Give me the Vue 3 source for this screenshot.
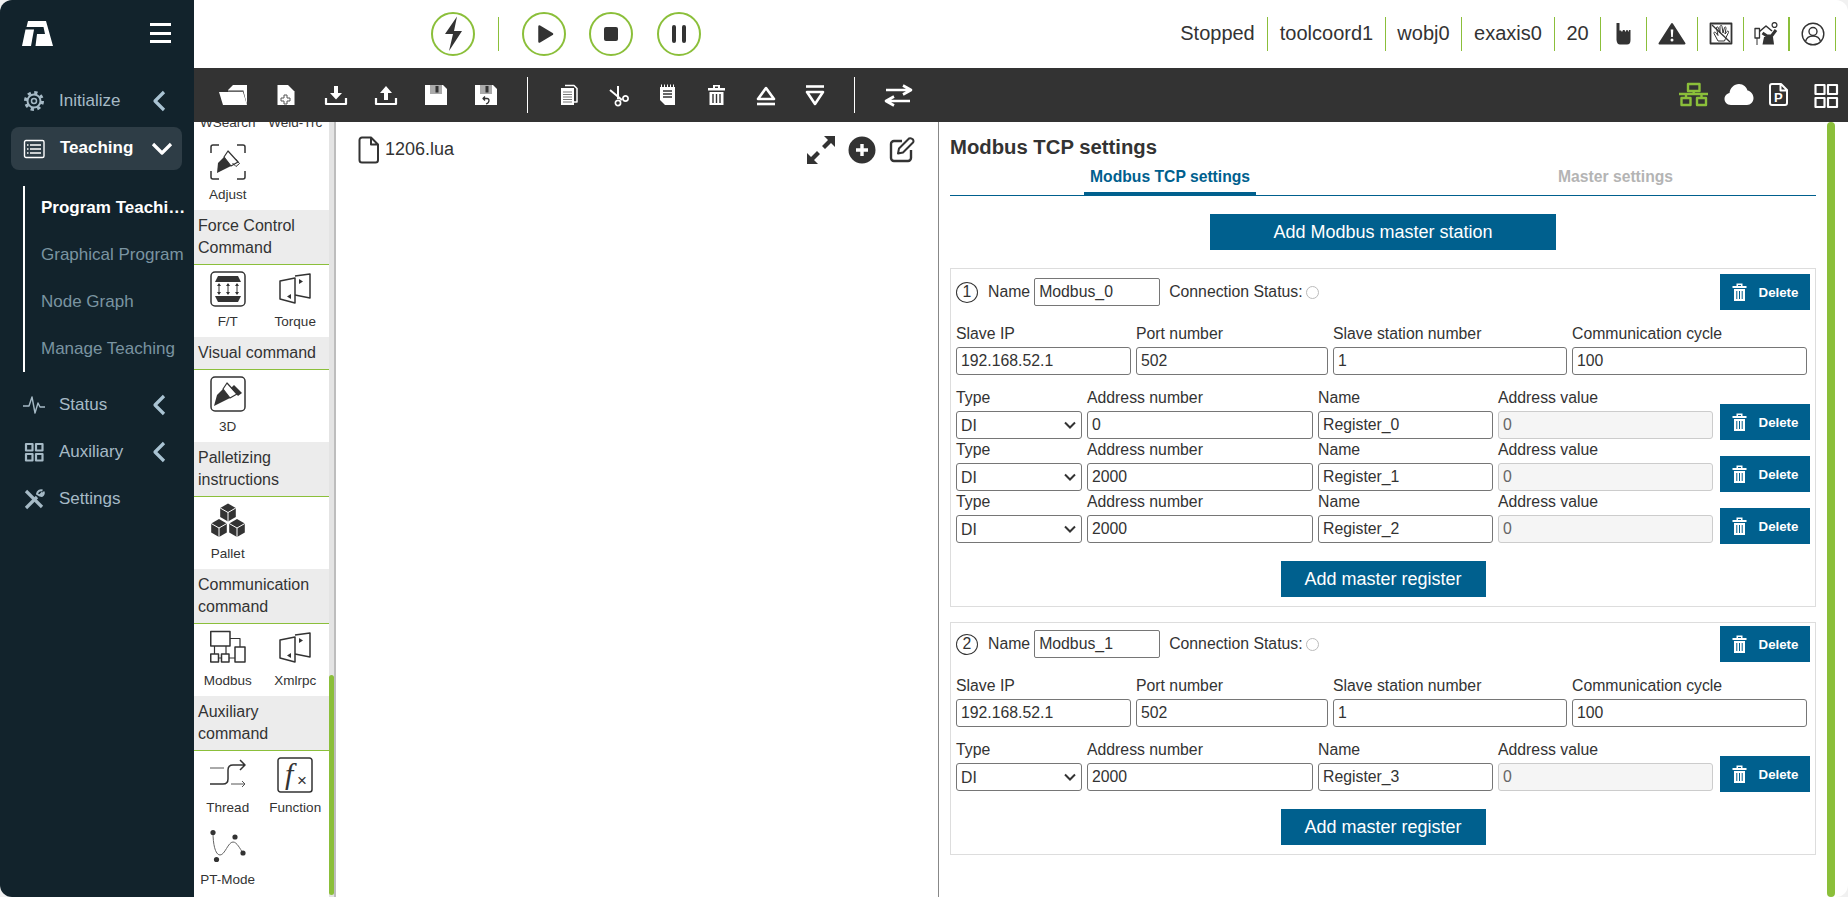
<template>
  <div class="app">
    <aside class="sidebar">
      <div class="brand">
        <Glyph class="logo" :w="31" :h="25" :paths="icons.logo" />
        <div class="burger"><span></span><span></span><span></span></div>
      </div>
      <nav class="menu">
        <div class="menu-item">
          <Glyph class="menu-icon" :w="22" :h="22" :paths="icons.gear" />
          <span>Initialize</span>
          <Glyph class="chevron" :w="14" :h="22" :paths="icons.chevron" />
        </div>
        <div class="menu-item active">
          <Glyph class="menu-icon" :w="22" :h="22" :paths="icons.list" />
          <span>Teaching</span>
          <Glyph class="chevron-down" :w="22" :h="14" :paths="icons.chevronDown" />
        </div>
        <div class="submenu">
          <div
            v-for="(name, i) in subMenu"
            :key="name"
            :class="['submenu-item', { current: i === 0 }]"
          >{{ name }}</div>
        </div>
        <div v-for="m in lowerMenu" :key="m.label" class="menu-item">
          <Glyph class="menu-icon" :w="22" :h="22" :paths="m.icon" />
          <span>{{ m.label }}</span>
          <Glyph v-if="m.arrow" class="chevron" :w="14" :h="22" :paths="icons.chevron" />
        </div>
      </nav>
    </aside>

    <div class="main">
      <header class="topbar">
        <button class="round"><Glyph :w="44" :h="44" :paths="icons.bolt" /></button>
        <i class="top-sep"></i>
        <button class="round"><Glyph :w="44" :h="44" :paths="icons.play" /></button>
        <button class="round"><Glyph :w="44" :h="44" :paths="icons.stop" /></button>
        <button class="round"><Glyph :w="44" :h="44" :paths="icons.pause" /></button>
        <div class="status">
          <div v-for="t in statusTexts" :key="t" class="cell">{{ t }}</div>
          <div class="cell cell-icon"><Glyph :w="16" :h="22" :paths="icons.hand" /></div>
          <div class="cell cell-icon wide"><Glyph :w="28" :h="23" :paths="icons.warning" /></div>
          <div class="cell cell-icon"><Glyph :w="24" :h="23" :paths="icons.noHand" /></div>
          <div class="cell cell-icon thick"><Glyph :w="26" :h="23" :paths="icons.robot" /></div>
          <div class="cell cell-icon"><Glyph :w="24" :h="24" :paths="icons.user" /></div>
        </div>
      </header>

      <div class="toolbar">
        <div class="tool-group first">
          <div v-for="(t, i) in fileTools" :key="i" class="tool"><Glyph :w="30" :h="30" :paths="t" /></div>
        </div>
        <i class="tool-sep"></i>
        <div class="tool-group second">
          <div v-for="(t, i) in editTools" :key="i" class="tool"><Glyph :w="30" :h="30" :paths="t" /></div>
        </div>
        <i class="tool-sep"></i>
        <Glyph class="swap" :w="30" :h="30" :paths="icons.swap" />
        <div class="tool-right">
          <Glyph :w="30" :h="30" :paths="icons.network" />
          <Glyph :w="30" :h="30" :paths="icons.cloud" />
          <Glyph :w="30" :h="30" :paths="icons.pdoc" />
          <Glyph :w="30" :h="30" :paths="icons.grid" />
        </div>
      </div>

      <div class="workspace">
        <div class="palette">
          <div class="palette-list">
            <div class="palette-scroll">
              <template v-for="sec in palette" :key="sec.title">
                <div v-if="sec.title" class="sec-title">{{ sec.title }}</div>
                <div class="sec-items">
                  <div v-for="item in sec.items" :key="item.label" class="sec-item">
                    <Glyph :w="36" :h="36" :paths="item.icon" />
                    <span>{{ item.label }}</span>
                  </div>
                </div>
              </template>
            </div>
          </div>
          <div class="palette-track"><div class="palette-thumb"></div></div>
        </div>

        <section class="editor">
          <div class="file-row">
            <Glyph :w="22" :h="28" :paths="icons.file" />
            <span class="file-name">1206.lua</span>
            <div class="file-actions">
              <Glyph :w="28" :h="28" :paths="icons.expand" />
              <Glyph :w="28" :h="28" :paths="icons.plus" />
              <Glyph :w="26" :h="28" :paths="icons.edit" />
            </div>
          </div>
        </section>

        <section class="settings">
          <div class="settings-body">
            <h2 class="title">Modbus TCP settings</h2>
            <div class="tabs">
              <div class="tab active">Modbus TCP settings</div>
              <div class="tab">Master settings</div>
            </div>
            <div class="center-btn first-btn">
              <button class="btn big">Add Modbus master station</button>
            </div>

            <div v-for="(st, idx) in stations" :key="st.name" class="card">
              <div class="name-row">
                <span class="num">{{ idx + 1 }}</span>
                <label class="name-label">Name</label>
                <input class="field name-input" :value="st.name" />
                <span class="conn">Connection Status:</span>
                <i class="radio"></i>
                <button class="btn del name-del"><Glyph :w="15" :h="18" :paths="icons.trashSmall" />Delete</button>
              </div>
              <div class="slave-row">
                <label v-for="f in slaveFields" :key="f.label" class="col">
                  <span>{{ f.label }}</span>
                  <input class="field" :value="f.value" />
                </label>
              </div>
              <div class="regs">
                <div v-for="r in st.regs" :key="r.name" class="reg-row">
                  <label class="col">
                    <span>Type</span>
                    <select class="field select"><option>DI</option><option>DO</option></select>
                  </label>
                  <label class="col">
                    <span>Address number</span>
                    <input class="field" :value="r.addr" />
                  </label>
                  <label class="col">
                    <span>Name</span>
                    <input class="field" :value="r.name" />
                  </label>
                  <label class="col">
                    <span>Address value</span>
                    <input class="field" value="0" disabled />
                  </label>
                  <button class="btn del reg-del"><Glyph :w="15" :h="18" :paths="icons.trashSmall" />Delete</button>
                </div>
              </div>
              <div class="center-btn add-reg">
                <button class="btn mid">Add master register</button>
              </div>
            </div>
          </div>
          <div class="settings-thumb"></div>
        </section>
      </div>
    </div>
  </div>
</template>

<script setup>
import { h } from 'vue'

// draws an svg from a list of fill / stroke / text parts
const Glyph = (props) =>
  h(
    'svg',
    { width: props.w, height: props.h, viewBox: `0 0 ${props.w} ${props.h}` },
    props.paths.map((p) =>
      p.text
        ? h('text', { x: p.x, y: p.y, fill: p.fill, 'font-size': p.size, 'font-family': p.family, 'font-style': p.italic, 'font-weight': p.weight }, p.text)
        : h('path', {
            d: p.d,
            fill: p.fill || 'none',
            stroke: p.stroke || 'none',
            'stroke-width': p.w,
            'stroke-dasharray': p.dash,
            'stroke-linejoin': 'round',
            'stroke-linecap': p.cap || 'butt',
            'fill-rule': 'evenodd'
          })
    )
  )
Glyph.props = ['w', 'h', 'paths']

const DARK = '#333333'
const WHITE = '#ffffff'
const GREEN = '#8bbf3a'
const MENU = '#a6bac6'
const f = (d, fill = DARK) => ({ d, fill })
const s = (d, stroke = DARK, w = 1.5, cap) => ({ d, stroke, w, cap })
const ring = (cx, cy, r) => `M${cx + r} ${cy}a${r} ${r} 0 1 1 ${-2 * r} 0a${r} ${r} 0 1 1 ${2 * r} 0Z`

const cube = (x, y) => [
  f(`M${x} ${y - 9}L${x + 7.8} ${y - 4.5}V${y + 4.5}L${x} ${y + 9}L${x - 7.8} ${y + 4.5}V${y - 4.5}Z`),
  s(`M${x - 7.8} ${y - 4.5}L${x} ${y}L${x + 7.8} ${y - 4.5}M${x} ${y}V${y + 9}`, WHITE, 1)
]

const panels = [
  s('M18 5L33 3V27L18 24'),
  s('M3 10L18 7V32L3 28Z'),
  f('M22 8L26 10.5L22 13Z'),
  f('M14 23L10 25.5L14 28Z')
]

const penBody = 'M14 13L18 7L28 18L21 22Z'
const penNib = 'M7 29L8 19L14 13L21 22L13 26Z'

const icons = {
  logo: [f('M6 0H24L31 25H13.5L15 13H23L21.5 6H4.5Z', WHITE), f('M3.5 8.5H12L9 25H0Z', WHITE)],
  gear: [
    { d: ring(11, 11, 8.5), stroke: MENU, w: 3, dash: '3.3 3.37' },
    s(ring(11, 11, 6.5), MENU, 2),
    s(ring(11, 11, 2.5), MENU, 1.5)
  ],
  list: [
    s('M3 2.5H19.5A1.5 1.5 0 0 1 21 4V18A1.5 1.5 0 0 1 19.5 19.5H3A1.5 1.5 0 0 1 1.5 18V4A1.5 1.5 0 0 1 3 2.5Z', WHITE, 1.4),
    s('M4 7H5.5M7 7H18M4 11H5.5M7 11H18M4 15H5.5M7 15H18', WHITE, 1.6)
  ],
  chevron: [s('M12 2L3 11L12 20', '#a9c3d3', 3.2)],
  chevronDown: [s('M2 2L11 11L20 2', WHITE, 3.2)],
  pulse: [s('M0 12H6L9 3L12 19L15 9L17 13H22', MENU, 1.4)],
  auxiliary: [s('M3 3H9.5V9.5H3ZM13 3H19.5V9.5H13ZM3 13H9.5V19.5H3ZM13 13H19.5V19.5H13Z', MENU, 2.2)],
  tools: [
    s('M3 3L19 19', MENU, 3.2),
    s('M3 20L14 9', MENU, 3.2),
    s('M19.5 4.5L16.5 7.5L14 6C14.5 3.5 17 1.5 19.5 2.5M17.5 8C19.5 8.5 21.5 6 20.5 3.5', MENU, 2)
  ],
  bolt: [f('M26 4.5L14 22H22L18 39L31 19H23Z')],
  play: [{ d: 'M17.5 14.5L30 22L17.5 29.5Z', fill: DARK, stroke: DARK, w: 2.5 }],
  stop: [f('M17 15H27A2 2 0 0 1 29 17V27A2 2 0 0 1 27 29H17A2 2 0 0 1 15 27V17A2 2 0 0 1 17 15Z')],
  pause: [s('M17 15V29M27 15V29', DARK, 4, 'round')],
  hand: [f('M.5 0H3.5V7.5H5L6 9L7 7H8.5L9.5 9L10.5 7H11.5L12.5 9L13 7H14.5V17Q14.5 21.5 11 21.5H4Q1 21.5 .5 17Z')],
  warning: [
    { d: 'M14 2L26.5 21.5H1.5Z', fill: DARK, stroke: DARK, w: 2 },
    f('M12.7 7.5H15.3L14.8 15H13.2Z', WHITE),
    f(ring(14, 18, 1.5), WHITE)
  ],
  noHand: [
    s('M1.5 1.5H22.5V21.5H1.5Z', DARK, 1.8),
    s('M3 3L21 20', DARK, 1.3),
    s('M9 19L5 11.5C4.5 10 6 9.5 7 11L9 13.5L7.5 6C7.5 4.5 9 4.5 9.5 6L11 11L11 4.5C11.5 3 13 3 13 4.5L14 11L15.5 5.5C16 4.5 17.5 5 17 6.5L16 12L18 9.5C19 8.5 20 9.5 19.5 10.5L16.5 16.5L15.5 19Z', DARK, 1)
  ],
  robot: [
    s('M2 6.5H6.5V16H2Z', DARK, 1.3),
    s('M4 16V23', DARK, 1),
    f('M11 15H20L21 22.5H9.5Z'),
    s('M6.5 9.5L13 4L19 9', DARK, 1.6),
    s('M9.5 11L14 14H18.5L23 8', DARK, 3),
    s(ring(21.5, 3, 2.4), DARK, 1.3)
  ],
  user: [
    s(ring(12, 12, 10.8), DARK, 1.4),
    s(ring(12, 9.5, 4), DARK, 1.4),
    s('M4.5 19.5C5.5 15.5 8.5 14 12 14C15.5 14 18.5 15.5 19.5 19.5', DARK, 1.4)
  ],
  swap: [s('M3 10H28M20 5.5L28 10L20 14.5', WHITE, 2.6), s('M27 21H3M11 16.5L3 21L11 25.5', WHITE, 2.6)],
  network: [
    s('M9 4H20.5V11H9Z', GREEN, 2.4),
    s('M0 14H29M14.7 11V14M7 14V18M22.5 14V18', GREEN, 2.4),
    s('M2.5 18H11.5V25H2.5ZM18 18H27V25H18Z', GREEN, 2.4)
  ],
  cloud: [f('M7 25C2.5 25 .5 21.5 .5 19C.5 15.5 3 13.5 5.5 13C6 8 10 4 15 4C19.5 4 22.5 7 23.5 10.5C27 11 29.5 14.5 29.5 18C29.5 22 26.5 25 23 25Z', WHITE)],
  pdoc: [
    s('M9 4H18L24 10V23A2 2 0 0 1 22 25H9A2 2 0 0 1 7 23V6A2 2 0 0 1 9 4ZM17.5 4V10.5H24', WHITE, 2),
    { text: 'P', x: 11, y: 22, fill: WHITE, size: 13, weight: 'bold', family: 'Liberation Sans' }
  ],
  grid: [s('M4.5 5H13.5V14H4.5ZM17 5H26V14H17ZM4.5 18H13.5V27H4.5ZM17 18H26V27H17Z', WHITE, 2.2)],
  file: [s('M4 1.5H13L20 8.5V24A2.5 2.5 0 0 1 17.5 26.5H4A2.5 2.5 0 0 1 1.5 24V4A2.5 2.5 0 0 1 4 1.5ZM13 1.5V8.5H20', DARK, 2)],
  expand: [f('M28 0V11L24 7L18 13L15 10L21 4L17 0Z'), f('M0 28V17L4 21L10 15L13 18L7 24L11 28Z')],
  plus: [f(ring(14, 14, 13.5)), s('M14 8V20M8 14H20', WHITE, 3.4)],
  edit: [
    s('M13 5H5A3 3 0 0 0 2 8V22A3 3 0 0 0 5 25H19A3 3 0 0 0 22 22V14', DARK, 2.4),
    s('M9 17.5L10 12.5L20 2.5Q22 1.5 24 3.5Q25 5.5 24 6.5L14 16.5Z', DARK, 2)
  ],
  trashSmall: [
    f('M.5 3H14.5V5H.5ZM4.5 3V.5H10.5V3H9V2H6V3Z', WHITE),
    f('M2 6H13V18H2Z', WHITE),
    s('M4.8 8V16M7.5 8V16M10.2 8V16', '#00608e', 1)
  ]
}

const subMenu = ['Program Teaching', 'Graphical Program', 'Node Graph', 'Manage Teaching']

const lowerMenu = [
  { label: 'Status', icon: icons.pulse, arrow: true },
  { label: 'Auxiliary', icon: icons.auxiliary, arrow: true },
  { label: 'Settings', icon: icons.tools, arrow: false }
]

const statusTexts = ['Stopped', 'toolcoord1', 'wobj0', 'exaxis0', '20']

const fileTools = [
  [f('M10 10L15 5H29V25L25.5 11H10Z', WHITE), f('M10 10H25.5V11.5H10Z', '#999'), f('M1 12H25L29 25H5Z', WHITE)],
  [f('M6.5 5H17L23.5 11.5V25H6.5Z', WHITE), s('M13 15H16V18H19V21H16V24H13V21H10V18H13Z', '#555', 1)],
  [f('M13 6H17V13H21L15 19.5L9 13H13Z', WHITE), s('M5 18V24H25V18', WHITE, 2.2)],
  [f('M15 6L21 13H17V20H13V13H9Z', WHITE), s('M5 18V24H25V18', WHITE, 2.2)],
  [f('M4 5H22L26 9V25H4Z', WHITE), f('M9 5H21V14H9Z', '#aaa'), f('M14.5 6H17.5V12.5H14.5Z', DARK)],
  [
    f('M4 5H22L26 9V25H4Z', WHITE),
    f('M9 5H21V14H9Z', '#aaa'),
    f('M14.5 6H17.5V12.5H14.5Z', DARK),
    s('M12 18.5H16Q18 18.5 18 20.5Q18 23 15 24M14 16.5L12 18.5L14 20.5', DARK, 1.3)
  ]
]

const editTools = [
  [
    s('M11 5.5H20L23 8.5V22H20', WHITE, 1.5),
    f('M7 8H20V25H7Z', WHITE),
    s('M9 12H18M9 14.5H18M9 17H18M9 19.5H18M9 22H18', '#777', 1.2)
  ],
  [
    s('M7 10L19 20M15 6V19', WHITE, 2),
    s(ring(15, 23, 2.6), WHITE, 1.7),
    s(ring(22.5, 18.5, 2.6), WHITE, 1.7)
  ],
  [
    f('M8 7H23V25H13L8 20Z', WHITE),
    s('M11 11H20M11 14H20M11 17H20', DARK, 1.3),
    s('M9.5 4.5V7M12.5 4.5V7M15.5 4.5V7M18.5 4.5V7M21.5 4.5V7', WHITE, 1)
  ],
  [
    f('M7 8H24V10.5H7ZM12 8V5H19V8H17V6.5H14V8Z', WHITE),
    f('M8.5 12H22.5V25H8.5Z', WHITE),
    s('M12 14V23M15.5 14V23M19 14V23', DARK, 1.4)
  ],
  [s('M16 8L24 19H8Z', WHITE, 2.6), s('M7 24H25', WHITE, 2.6)],
  [s('M16 24L24 12H8Z', WHITE, 2.6), s('M7 6.5H25', WHITE, 2.6)]
]

const palette = [
  {
    items: [
      { label: 'WSearch', icon: [] },
      { label: 'Weld-Trc', icon: [] },
      {
        label: 'Adjust',
        icon: [
          s('M1 9V3A2 2 0 0 1 3 1H9M27 1H33A2 2 0 0 1 35 3V9M35 27V33A2 2 0 0 1 33 35H27M9 35H3A2 2 0 0 1 1 33V27'),
          f(penNib),
          s(penBody, DARK, 1.2),
          s('M25.5 15L29.5 19.5L26 22.5L22.5 19', DARK, 1)
        ]
      }
    ]
  },
  {
    title: 'Force Control Command',
    items: [
      {
        label: 'F/T',
        icon: [
          s('M5 1H31A4 4 0 0 1 35 5V31A4 4 0 0 1 31 35H5A4 4 0 0 1 1 31V5A4 4 0 0 1 5 1Z'),
          f('M5 11L8 5H28L31 11Z'),
          f('M5 25H31L28 31H8Z'),
          s('M9 13V23M18 13V23M27 13V23', DARK, 1),
          f('M9 12L11 15H7ZM18 12L20 15H16ZM27 12L29 15H25ZM9 24L11 21H7ZM18 24L20 21H16ZM27 24L29 21H25Z')
        ]
      },
      { label: 'Torque', icon: panels }
    ]
  },
  {
    title: 'Visual command',
    items: [
      {
        label: '3D',
        icon: [
          s('M5 1H31A4 4 0 0 1 35 5V31A4 4 0 0 1 31 35H5A4 4 0 0 1 1 31V5A4 4 0 0 1 5 1Z'),
          f('M4 30L7 19L13 13L20 22L12 26Z'),
          s('M13 13L17 7L27 18L20 22Z', DARK, 1.2),
          f('M24 9L32 17L28 20L21 12Z')
        ]
      }
    ]
  },
  {
    title: 'Palletizing instructions',
    items: [{ label: 'Pallet', icon: [...cube(18, 9.5), ...cube(9, 25), ...cube(27, 25)] }]
  },
  {
    title: 'Communication command',
    items: [
      {
        label: 'Modbus',
        icon: [
          s('M.75 1.5H20V16H.75ZM.75 24H8.5V32H.75ZM11.5 24H19V32H11.5ZM25 17H35V32H25Z'),
          s('M4.5 16V24M16 16V24M8.5 28H11.5M19 28H25M20 8.5H30V17', DARK, 1.2)
        ]
      },
      { label: 'Xmlrpc', icon: panels }
    ]
  },
  {
    title: 'Auxiliary command',
    items: [
      {
        label: 'Thread',
        icon: [
          s('M0 27H13Q18 27 18 22V13Q18 8 23 8H35M30 3L35 8L30 13'),
          s('M0 11H14M21 27H35M32 24L35 27L32 30', '#555', 1)
        ]
      },
      {
        label: 'Function',
        icon: [
          s('M3.5 1H32.5A2.5 2.5 0 0 1 35 3.5V32.5A2.5 2.5 0 0 1 32.5 35H3.5A2.5 2.5 0 0 1 1 32.5V3.5A2.5 2.5 0 0 1 3.5 1Z'),
          { text: 'f', x: 8, y: 27, fill: DARK, size: 30, italic: 'italic', family: 'Liberation Serif' },
          { text: '×', x: 20, y: 29, fill: DARK, size: 17, family: 'Liberation Sans' }
        ]
      },
      {
        label: 'PT-Mode',
        icon: [
          s('M3 4C3 14 5 26 10 26C15 26 18 13 23 13C27 13 30 20 33 24', '#666', 1),
          f(ring(3, 3.5, 2.6)),
          f(ring(25, 8, 2.6)),
          f(ring(33, 24, 2.6)),
          f(ring(6.5, 30.5, 2.6))
        ]
      }
    ]
  }
]

const slaveFields = [
  { label: 'Slave IP', value: '192.168.52.1' },
  { label: 'Port number', value: '502' },
  { label: 'Slave station number', value: '1' },
  { label: 'Communication cycle', value: '100' }
]

const stations = [
  {
    name: 'Modbus_0',
    regs: [
      { addr: '0', name: 'Register_0' },
      { addr: '2000', name: 'Register_1' },
      { addr: '2000', name: 'Register_2' }
    ]
  },
  {
    name: 'Modbus_1',
    regs: [{ addr: '2000', name: 'Register_3' }]
  }
]
</script>

<style>
html,
body {
  margin: 0;
  height: 100%;
  background: #f1f1f1;
  overflow: hidden;
}
</style>

<style scoped>
* {
  box-sizing: border-box;
}

.app {
  display: flex;
  height: 897px;
  overflow: hidden;
  border-radius: 12px;
  background: #fff;
  color: #333;
  font-family: "Liberation Sans", Arial, sans-serif;
  font-size: 16px;
}

svg {
  display: block;
  flex: none;
}

/* sidebar */
.sidebar {
  width: 194px;
  flex: none;
  background: #12232c;
  color: #a6bac6;
  font-size: 17px;
}

.brand {
  display: flex;
  align-items: center;
  justify-content: space-between;
  height: 66px;
  padding: 0 23px 0 22px;
}

.burger span {
  display: block;
  width: 21px;
  height: 3px;
  margin: 5.5px 0;
  background: #fff;
}

.menu {
  padding-top: 11px;
}

.menu-item {
  display: flex;
  align-items: center;
  height: 47px;
  padding-left: 23px;
}

.menu-icon {
  margin-right: 14px;
}

.chevron {
  position: absolute;
  left: 152px;
}

.menu-item span {
  flex: none;
}

.menu-item.active {
  height: 43px;
  margin: 3px 12px 16px 11px;
  padding-left: 12px;
  border-radius: 8px;
  background: #2e3d46;
  color: #fff;
  font-weight: 700;
}

.menu-item.active span {
  margin-top: -2px;
}

.menu-item.active .menu-icon {
  margin-right: 15px;
}

.chevron-down {
  margin-left: 18px;
}

.submenu {
  height: 186px;
  margin: 0 7px 9px 23px;
  padding-left: 16px;
  border-left: 2px solid #fff;
}

.submenu-item {
  height: 47px;
  padding-top: 12px;
  overflow: hidden;
  color: #7a94a1;
  white-space: nowrap;
  text-overflow: ellipsis;
}

.submenu-item.current {
  color: #fff;
  font-weight: 700;
}

/* top bar */
.main {
  display: flex;
  flex: 1;
  flex-direction: column;
  min-width: 0;
}

.topbar {
  display: flex;
  flex: none;
  align-items: center;
  gap: 23px;
  height: 68px;
  padding: 0 12px 1px 237px;
}

.round {
  width: 44px;
  height: 44px;
  padding: 0;
  border: 2px solid #8bbf3a;
  border-radius: 50%;
  background: #fff;
}

.round:last-of-type {
  margin-left: 1px;
}

.round svg {
  margin: -2px;
}

.top-sep {
  width: 1px;
  height: 34px;
  background: #8bbf3a;
}

.status {
  display: flex;
  align-items: center;
  margin-left: auto;
}

.cell {
  display: flex;
  align-items: center;
  justify-content: center;
  height: 34px;
  border-right: 1px solid #8bbf3a;
  font-size: 20px;
}

.cell:nth-child(1) {
  width: 100px;
}

.cell:nth-child(2) {
  width: 118px;
}

.cell:nth-child(3) {
  width: 76px;
}

.cell:nth-child(4) {
  width: 93px;
}

.cell:nth-child(5) {
  width: 46px;
}

.cell-icon {
  width: 46px;
}

.cell-icon.wide {
  width: 51px;
}

.cell-icon.thick {
  border-right-width: 2px;
}

/* tool bar */
.toolbar {
  display: flex;
  flex: none;
  align-items: center;
  height: 54px;
  padding: 0 7px 0 14px;
  background: #333;
}

.tool-group {
  display: flex;
}

.tool {
  display: flex;
  justify-content: center;
  width: 50px;
}

.first .tool:first-child {
  margin-right: 3px;
}

.second .tool {
  width: 49px;
}

.tool-sep {
  width: 1px;
  height: 36px;
  margin: 0 16px;
  background: #fff;
}

.swap {
  margin-left: 12px;
}

.tool-right {
  display: flex;
  margin-left: auto;
}

.tool-right svg:nth-child(2) {
  margin-left: 15px;
}

.tool-right svg:nth-child(3) {
  margin-left: 9px;
}

.tool-right svg:nth-child(4) {
  margin-left: 18px;
}

/* work area */
.workspace {
  display: flex;
  flex: 1;
  min-height: 0;
}

.palette {
  display: flex;
  flex: none;
  width: 142px;
}

.palette-list {
  width: 135px;
  overflow: hidden;
}

.palette-scroll {
  margin-top: -56px;
}

.sec-title {
  padding: 5px 4px 5px 4px;
  border-bottom: 1px solid #8bbf3a;
  background: #ececec;
  line-height: 22px;
}

.sec-items {
  display: grid;
  grid-template-columns: 1fr 1fr;
}

.sec-item {
  display: flex;
  flex-direction: column;
  align-items: center;
  height: 72px;
  padding-top: 6px;
  font-size: 13.5px;
}

.sec-item span {
  margin-top: 7px;
  white-space: nowrap;
}

.palette-track {
  display: flex;
  flex-direction: column;
  justify-content: flex-end;
  width: 7px;
  padding-bottom: 2px;
  border-right: 2px solid #bdbdbd;
  background: #e4e4e4;
}

.palette-thumb {
  height: 220px;
  border-radius: 3px;
  background: #8bbf3a;
}

.editor {
  flex: none;
  width: 603px;
  border-right: 1px solid #888;
}

.file-row {
  display: flex;
  align-items: center;
  height: 55px;
  padding: 0 23px 0 22px;
}

.file-name {
  margin-left: 5px;
  font-size: 18px;
}

.file-actions {
  display: flex;
  gap: 13px;
  margin-left: auto;
}

/* modbus panel */
.settings {
  display: flex;
  flex: 1;
  min-width: 0;
  padding-left: 11px;
  font-size: 15.8px;
}

.settings-body {
  flex: 1;
  min-width: 0;
}

.settings-thumb {
  flex: none;
  width: 8px;
  margin: 0 13px 0 11px;
  border-radius: 4px;
  background: #8bbf3a;
}

.title {
  margin: 0;
  padding-top: 13px;
  font-size: 20.3px;
  line-height: 24px;
}

.tabs {
  display: flex;
  height: 35px;
  margin-top: 2px;
  border-bottom: 1px solid #00608e;
}

.tab {
  height: 35px;
  padding: 7px 6px 0;
  color: #b4b4b4;
  font-size: 15.7px;
  font-weight: 700;
  white-space: nowrap;
}

.tab.active {
  width: 172px;
  margin-left: 134px;
  margin-right: 296px;
  border-bottom: 4px solid #00608e;
  color: #00608e;
  text-align: center;
}

.center-btn {
  display: flex;
  justify-content: center;
}

.first-btn {
  margin: 18px 0;
}

.btn {
  display: flex;
  align-items: center;
  justify-content: center;
  height: 36px;
  padding: 0;
  border: 0;
  background: #00608e;
  color: #fff;
  font-family: inherit;
}

.btn.big {
  width: 346px;
  font-size: 18px;
}

.btn.mid {
  width: 205px;
  font-size: 18px;
}

.btn.del {
  flex: none;
  gap: 12px;
  width: 90px;
  font-size: 13.3px;
  font-weight: 700;
}

.card {
  padding: 5px 5px 9px;
  border: 1px solid #ddd;
}

.card + .card {
  margin-top: 15px;
  padding-top: 3px;
}

.name-row {
  display: flex;
  align-items: center;
  height: 36px;
}

.num {
  display: flex;
  align-items: center;
  justify-content: center;
  width: 22px;
  height: 21px;
  border: 1px solid #333;
  border-radius: 50%;
}

.name-label {
  margin-left: 10px;
}

.name-input {
  margin-left: 4px;
}

.conn {
  margin-left: 9px;
}

.radio {
  width: 13px;
  height: 13px;
  margin-left: 3px;
  border: 1px solid #bbb;
  border-radius: 50%;
}

.name-del {
  margin-left: auto;
}

.slave-row {
  display: grid;
  grid-template-columns: 175px 192px 234px 235px;
  gap: 5px;
  margin-top: 13px;
}

.regs {
  margin-top: 12px;
}

.reg-row {
  display: grid;
  grid-template-columns: 126px 226px 175px 215px 1fr;
  gap: 5px;
}

.reg-del {
  align-self: end;
  justify-self: end;
  margin-bottom: -1px;
}

.col {
  display: flex;
  flex-direction: column;
}

.col span {
  height: 24px;
  line-height: 22px;
  white-space: nowrap;
}

.field {
  width: 100%;
  height: 28px;
  padding: 0 4px;
  border: 1px solid #767676;
  border-radius: 3px;
  background: #fff;
  color: #333;
  font-family: inherit;
  font-size: 15.8px;
}

.select {
  appearance: none;
  background: #fff url("data:image/svg+xml,%3Csvg xmlns='http://www.w3.org/2000/svg' width='12' height='8'%3E%3Cpath d='M1 1.5l5 5 5-5' fill='none' stroke='%23333' stroke-width='2'/%3E%3C/svg%3E") no-repeat right 5px center;
}

.name-input.field {
  width: 126px;
  border-radius: 2px;
}

.field:disabled {
  border-color: #ccc;
  background: #f5f5f5;
  color: #666;
}

.add-reg {
  margin-top: 18px;
}
</style>
